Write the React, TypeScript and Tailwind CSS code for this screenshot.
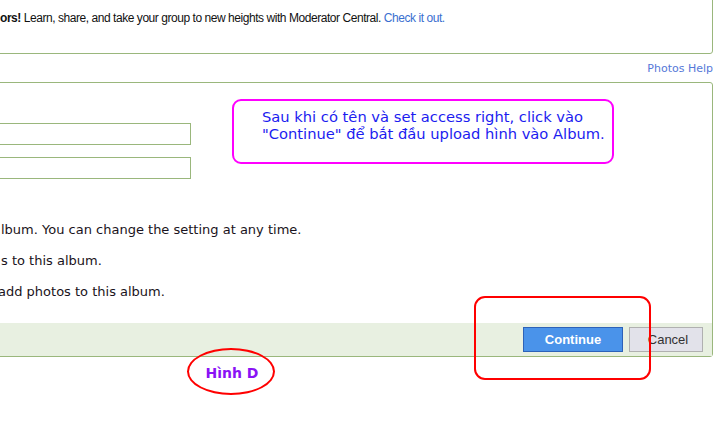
import React from 'react';

const lines = [
  'lbum. You can change the setting at any time.',
  's to this album.',
  'add photos to this album.',
];

function Callout() {
  return (
    <div className="absolute left-[241px] top-[16px] w-[382px] h-[65px] rounded-[9px] border-2 border-[#ff00ff] bg-white pl-[28px] pt-[7px] text-[14.7px] leading-[17px] text-[#1c1cf0] font-['DejaVu_Sans',sans-serif]">
      Sau khi có tên và set access right, click vào
      <br />
      "Continue" để bắt đầu upload hình vào Album.
    </div>
  );
}

export default function App() {
  return (
    <div className="relative w-[720px] h-[430px] overflow-hidden bg-white font-['DejaVu_Sans',sans-serif]">
      <div className="ml-[-10px] mr-[7px]">
        {/* banner */}
        <div className="mt-[-10px] h-[64px] rounded-br-[3px] border border-[#9ab77c] bg-white pl-[9px] pt-[19px] text-[12px] leading-[16px] tracking-[-0.45px] text-[#111] font-['Liberation_Sans',sans-serif]">
          <b>ors!</b> Learn, share, and take your group to new heights with Moderator Central.{' '}
          <span className="text-[#3a6fd0]">Check it out.</span>
        </div>

        <div className="flex h-[28px] items-center justify-end pt-[3px] text-[11px] text-[#5578d8]">
          Photos Help
        </div>

        {/* form panel */}
        <div className="relative flex h-[275px] flex-col rounded-tr-[3px] rounded-br-[3px] border border-[#9ab77c] bg-white">
          <div className="flex flex-col gap-[12px] pt-[40px]">
            <div className="h-[22px] w-[200px] border border-[#9ab77c] bg-white" />
            <div className="h-[22px] w-[200px] border border-[#9ab77c] bg-white" />
          </div>
          <div className="mt-[43px] flex flex-col gap-[15px] pl-[10px] text-[13px] leading-[16px] text-[#1a1320]">
            {lines.map((l, i) => (
              <div key={i} className={i === 2 ? 'ml-[-3px]' : ''}>
                {l}
              </div>
            ))}
          </div>
          <div className="mt-auto flex h-[33px] items-start justify-end gap-[6px] bg-[#e8f0e1] pr-[9px] pt-[4px] font-['Liberation_Sans',sans-serif]">
            <button className="h-[25px] w-[100px] border border-[#2d62b8] bg-[#4a93ea] text-[13px] font-bold text-white">
              Continue
            </button>
            <button className="h-[25px] w-[74px] border border-[#b0b0b0] bg-[#e2e2ea] pl-[4px] text-[13px] text-[#333]">
              Cancel
            </button>
          </div>
          <Callout />
        </div>
      </div>

      {/* annotations */}
      <div className="absolute left-[474px] top-[296px] h-[84px] w-[177px] rounded-[11px] border-2 border-[#ff0000]" />
      <div className="absolute left-[187px] top-[348px] flex h-[47px] w-[88px] items-center justify-center rounded-[50%] border-2 border-[#ff0000] pl-[2px] pt-[4px] text-[14px] font-bold text-[#8a12f5] font-['DejaVu_Sans',sans-serif]">
        Hình D
      </div>
    </div>
  );
}
